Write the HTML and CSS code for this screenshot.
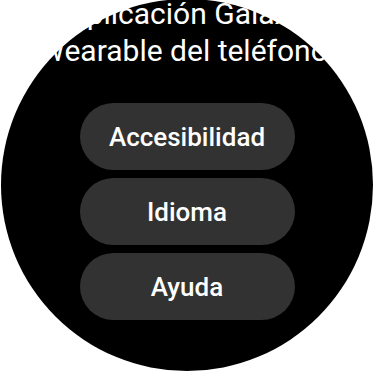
FILE: index.html
```html
<!DOCTYPE html>
<html lang="es">
<head>
    <meta charset="UTF-8">
    <meta name="viewport" content="width=device-width, initial-scale=1.0">
    <title>Ajustes</title>
    <link rel="stylesheet" href="styles.css">
</head>
<body>
    <div class="watch">
        <div class="screen">
            <p class="note">aplicación Galaxy<br>Wearable del teléfono.</p>
            <div class="menu">
                <div class="item">Accesibilidad</div>
                <div class="item">Idioma</div>
                <div class="item">Ayuda</div>
            </div>
        </div>
    </div>
</body>
</html>
```

FILE: styles.css
```css
html, body {
  margin: 0;
  padding: 0;
  background-color: #fff;
}

body {
  width: 374px;
  height: 374px;
  overflow: hidden;
  font-family: Roboto, "Noto Sans", sans-serif;
}

.watch {
  width: 372px;
  height: 372px;
  margin: -1px auto 0;
  border-radius: 50%;
  background-color: #000;
}

.screen {
  display: flex;
  flex-direction: column;
  align-items: center;
}

.note {
  margin: -4px 0 0;
  width: 374px;
  text-align: center;
  color: #fff;
  font-size: 30px;
  line-height: 37px;
  white-space: nowrap;
}

.menu {
  display: flex;
  flex-direction: column;
  gap: 8px;
  margin-top: 34px;
}

.item {
  width: 215px;
  height: 67px;
  border-radius: 34px;
  background-color: #323232;
  color: #fff;
  font-size: 26px;
  font-weight: 500;
  display: flex;
  align-items: center;
  justify-content: center;
}
```
